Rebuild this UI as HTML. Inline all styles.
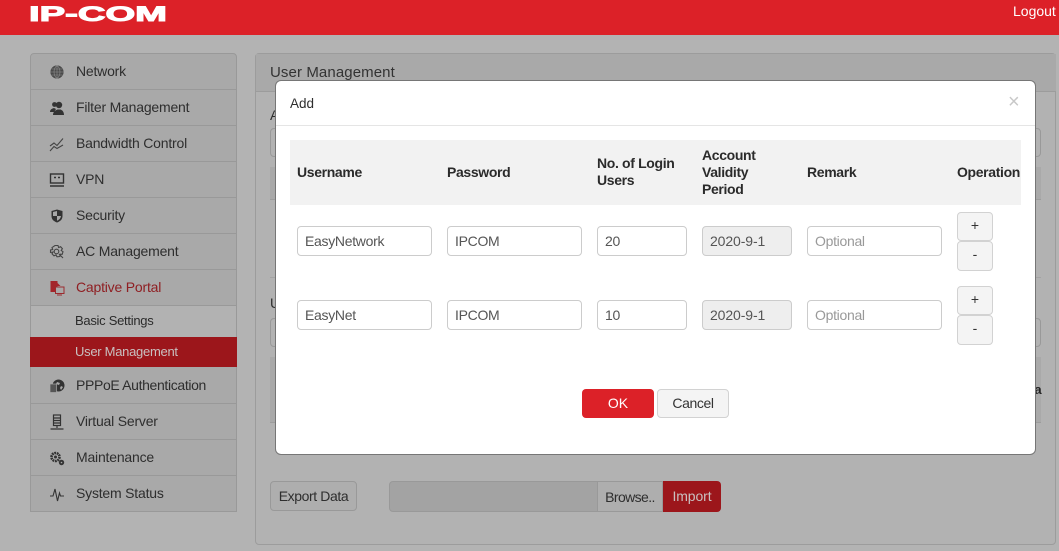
<!DOCTYPE html>
<html><head><meta charset="utf-8"><title>Add</title>
<style>
*{box-sizing:border-box}
html,body{margin:0;padding:0}
body{width:1059px;height:551px;overflow:hidden;position:relative;background:#b3b3b3;font-family:"Liberation Sans",sans-serif;font-size:14px;color:#2e2e2e}
.a{position:absolute}
.hd{left:0;top:0;width:1059px;height:35px;background:#dc2128}
.logo{left:29px;top:1px;font-weight:bold;font-size:21px;line-height:28px;color:#fff;transform:scaleX(1.82);transform-origin:0 0;-webkit-text-stroke:1px #fff;white-space:nowrap}
.out{left:1013px;top:3px;color:#fff;line-height:17px}
.side{left:30px;top:53px;width:207px;height:459px;border:1px solid #999;border-radius:4px 4px 0 0;background:#a9a9a9}
.it{position:absolute;left:30px;width:207px;height:36px;border-bottom:1px solid #999;line-height:35px;padding-left:46px;letter-spacing:-.2px;color:#2e2e2e}
.it svg{position:absolute;left:19px;top:10px;width:16px;height:16px}
.sub{position:absolute;left:30px;width:207px;line-height:30px;padding-left:45px;font-size:13px;letter-spacing:-.28px}
.panel{left:255px;top:53px;width:801px;height:492px;border:1px solid #9c9c9c;border-radius:4px;background:#b2b2b2}
.ph{left:256px;top:54px;width:800px;height:38px;background:#a9a9a9;border-bottom:1px solid #9c9c9c}
.bg{background:#a9a9a9}
.modal{left:276px;top:81px;width:759px;height:373px;background:#fff;border-radius:5px;box-shadow:0 0 0 1px #767676}
.mt{left:290px;top:95px;line-height:17px;font-size:13.5px}
.x{left:1008px;top:91px;line-height:22px;font-size:20px;color:#c8c8c8}
.line{left:276px;top:125px;width:759px;height:1px;background:#e5e5e5}
.th{left:290px;top:140px;width:731px;height:65px;background:#f2f2f2}
.h{position:absolute;font-weight:bold;font-size:14px;line-height:17px;color:#2b2b2b;letter-spacing:-.35px}
.i{position:absolute;height:30px;border:1px solid #ccc;border-radius:4px;background:#fff;line-height:28px;padding-left:7px;color:#555;font-size:14px;letter-spacing:-.3px;white-space:nowrap}
.d{background:#eee;letter-spacing:-.1px}
.p{color:#999}
.b{position:absolute;left:957px;width:36px;height:29px;border:1px solid #d2d2d2;border-radius:4px;background:#f4f4f4;text-align:center;line-height:25px;color:#333}
.ok{left:582px;top:389px;width:72px;height:29px;background:#dc2128;border-radius:4px;color:#fff;text-align:center;line-height:29px}
.cc{left:657px;top:389px;width:72px;height:29px;background:#f4f4f4;border:1px solid #d2d2d2;border-radius:4px;text-align:center;line-height:27px;color:#333;letter-spacing:-.4px}
</style></head><body>
<div class="a hd"></div>
<div class="a logo">IP-COM</div>
<div class="a out">Logout</div>

<div class="a side"></div>
<div class="it" style="top:54px">Network<svg viewBox="0 0 16 16"><circle cx="8" cy="8" r="6.600" fill="#4a4a4a"/><path d="M1.500 8h13M8 1.500v13M2.500 5h11M2.500 11h11M8 1.500c-4 3-4 10 0 13M8 1.500c4 3 4 10 0 13" fill="none" stroke="#8e8e8e" stroke-width=".6"/></svg></div>
<div class="it" style="top:90px">Filter Management<svg viewBox="0 0 16 16" fill="#333"><circle cx="10" cy="5" r="3.200"/><circle cx="5.500" cy="4.500" r="2.400"/><path d="M1 12c0-2.500 2-3.500 4-4l2 1-2 3zM4 15c0-3.500 3-5 4.500-5.500h3c1.500.5 3.500 2 3.500 5.500z"/></svg></div>
<div class="it" style="top:126px">Bandwidth Control<svg viewBox="0 0 16 16" fill="none" stroke="#444" stroke-width="1.100"><path d="M1 10l4-3 3 2.500 6-7M1 15l4-4.500 3 2 6-3.500"/></svg></div>
<div class="it" style="top:162px">VPN<svg viewBox="0 0 16 16" fill="none" stroke="#333" stroke-width="1.400"><rect x="1.500" y="2" width="13" height="9"/><path d="M1 14h14M5 5.500h2M9 5.500h2"/></svg></div>
<div class="it" style="top:198px">Security<svg viewBox="0 0 16 16"><path d="M8 1.500l5.500 1.500v5c0 3.500-2.500 5.500-5.500 6.500-3-1-5.500-3-5.500-6.500V3z" fill="#333"/><path d="M8 8h4c-.4 2.500-2 3.800-4 4.800zM8 8H4V4L8 3z" fill="#a9a9a9"/></svg></div>
<div class="it" style="top:234px">AC Management<svg viewBox="0 0 16 16" fill="none" stroke="#444" stroke-width="1.100"><circle cx="7.500" cy="7.500" r="2.300"/><path d="M6 1.500h3l.6 2 2-.8 1.800 2-1.200 1.800 1.800 1.200-.8 2.600-2-.1-.4 2.300-2.800.3-1-1.800-2 .8-2-2 1-1.800L1.500 8.500V6l2.200-.4-.7-2z"/><path d="M10 10l4 4"/></svg></div>
<div class="it" style="top:270px;color:#8f1f23">Captive Portal<svg viewBox="0 0 16 16"><rect x="1.500" y="1" width="7" height="11" fill="#a3252a"/><path d="M8.500 3l3 3h-3z" fill="#a3252a"/><rect x="6.500" y="7" width="8.500" height="6.500" fill="#a9a9a9" stroke="#9c2a2e"/><path d="M8 15h5" stroke="#9c2a2e"/></svg></div>
<div class="a" style="left:30px;top:306px;width:207px;height:61px;background:#b2b2b2;border:1px solid #999;border-top:0;border-bottom:0"></div>
<div class="sub" style="top:306px;color:#2b2b2b">Basic Settings</div>
<div class="sub" style="top:337px;height:30px;background:#9c161b;color:#c9c0c0">User Management</div>
<div class="it" style="top:367px;height:37px;line-height:37px;letter-spacing:-.35px">PPPoE Authentication<svg viewBox="0 0 16 16" style="top:11px"><circle cx="9.500" cy="7.500" r="6" fill="#333"/><path d="M8 4l3 1-1 2-3-1zM12 8l2 1-2 3-1-2z" fill="#a9a9a9"/><rect x="1" y="6" width="6.500" height="8.500" fill="#555" stroke="#a9a9a9" stroke-width=".7"/></svg></div>
<div class="it" style="top:404px">Virtual Server<svg viewBox="0 0 16 16" fill="none" stroke="#333" stroke-width="1.200"><rect x="4.500" y="1" width="7" height="10.500"/><path d="M5 4h6M5 6.500h6M5 9h6M8 11.500V14M1.500 15h13"/></svg></div>
<div class="it" style="top:440px">Maintenance<svg viewBox="0 0 16 16"><circle cx="6.500" cy="7" r="4" fill="none" stroke="#333" stroke-width="2.600" stroke-dasharray="1.800 .7"/><circle cx="6.500" cy="7" r="1.500" fill="#333"/><circle cx="12.500" cy="12.500" r="2.700" fill="#333"/><circle cx="12.500" cy="12.500" r=".8" fill="#a9a9a9"/></svg></div>
<div class="it" style="top:476px;height:36px">System Status<svg viewBox="0 0 16 16" fill="none" stroke="#333" stroke-width="1.100"><path d="M1 10h3l2-7 2.500 12 2-8 1 3h3.500"/></svg></div>

<div class="a panel"></div>
<div class="a ph"></div>
<div class="a" style="left:270px;top:64px;line-height:18px;font-size:15px;letter-spacing:.1px;color:#333">User Management</div>
<div class="a" style="left:270px;top:107px;line-height:17px;color:#2e2e2e">A</div>
<div class="a" style="left:270px;top:128px;width:771px;height:29px;border:1px solid #999;border-radius:4px"></div>
<div class="a bg" style="left:270px;top:167px;width:771px;height:33px;border-bottom:1px solid #9c9c9c"></div>
<div class="a" style="left:270px;top:277px;width:771px;height:1px;background:#a3a3a3"></div>
<div class="a" style="left:270px;top:295px;line-height:17px;color:#2e2e2e">U</div>
<div class="a" style="left:270px;top:318px;width:771px;height:29px;border:1px solid #999;border-radius:4px"></div>
<div class="a bg" style="left:270px;top:357px;width:771px;height:66px;border-bottom:1px solid #9c9c9c"></div>
<div class="a" style="left:1030px;top:381px;font-weight:bold;font-size:13px;line-height:17px;color:#222">ta</div>
<div class="a" style="left:270px;top:481px;width:87px;height:30px;border:1px solid #999;border-radius:4px;background:#aeaeae;text-align:center;line-height:28px;color:#2e2e2e;letter-spacing:-.4px">Export Data</div>
<div class="a" style="left:389px;top:481px;width:209px;height:31px;border:1px solid #999;border-radius:4px 0 0 4px;background:#a3a3a3"></div>
<div class="a" style="left:597px;top:481px;width:66px;height:31px;border:1px solid #999;background:#aeaeae;text-align:center;line-height:30px;color:#2e2e2e;letter-spacing:-.6px">Browse..</div>
<div class="a" style="left:663px;top:481px;width:58px;height:31px;background:#9c161b;border-radius:0 4px 4px 0;text-align:center;line-height:30px;color:#c9c0c0;letter-spacing:-.1px">Import</div>

<div class="a modal"></div>
<div class="a mt">Add</div>
<div class="a x">×</div>
<div class="a line"></div>
<div class="a th"></div>
<div class="h" style="left:297px;top:164px">Username</div>
<div class="h" style="left:447px;top:164px">Password</div>
<div class="h" style="left:597px;top:155px">No. of Login<br>Users</div>
<div class="h" style="left:702px;top:147px">Account<br>Validity<br>Period</div>
<div class="h" style="left:807px;top:164px">Remark</div>
<div class="h" style="left:957px;top:164px">Operation</div>

<div class="i" style="left:297px;top:226px;width:135px">EasyNetwork</div>
<div class="i" style="left:447px;top:226px;width:135px">IPCOM</div>
<div class="i" style="left:597px;top:226px;width:90px">20</div>
<div class="i d" style="left:702px;top:226px;width:90px">2020-9-1</div>
<div class="i p" style="left:807px;top:226px;width:135px">Optional</div>
<div class="b" style="top:212px">+</div>
<div class="b" style="top:241px;height:30px">-</div>

<div class="i" style="left:297px;top:300px;width:135px">EasyNet</div>
<div class="i" style="left:447px;top:300px;width:135px">IPCOM</div>
<div class="i" style="left:597px;top:300px;width:90px">10</div>
<div class="i d" style="left:702px;top:300px;width:90px">2020-9-1</div>
<div class="i p" style="left:807px;top:300px;width:135px">Optional</div>
<div class="b" style="top:286px">+</div>
<div class="b" style="top:315px;height:30px">-</div>

<div class="a ok">OK</div>
<div class="a cc">Cancel</div>
</body></html>
